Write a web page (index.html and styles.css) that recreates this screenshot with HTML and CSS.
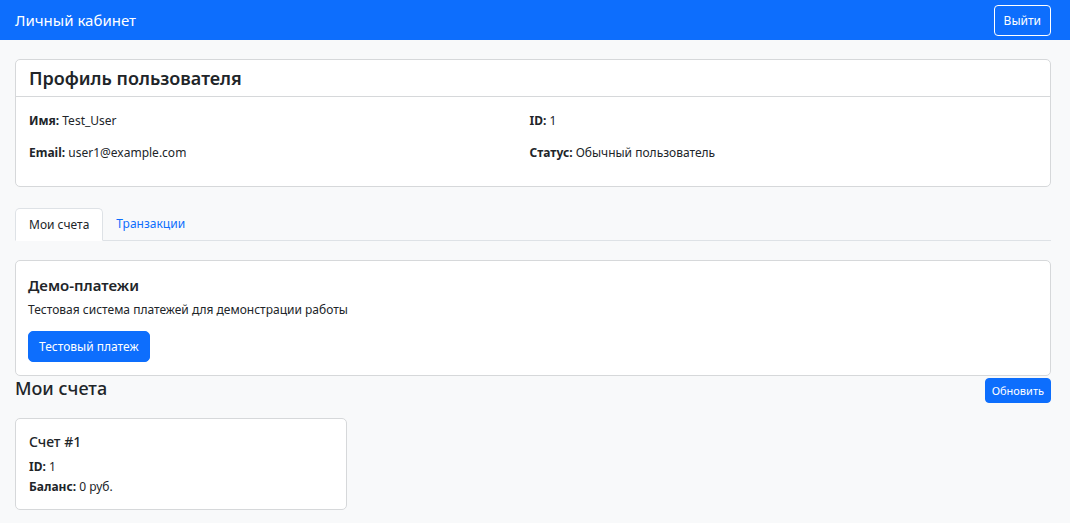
FILE: index.html
```html
<!DOCTYPE html>
<html lang="ru">
<head>
<meta charset="utf-8">
<title>Личный кабинет</title>
<link rel="stylesheet" href="styles.css">
</head>
<body>
<nav class="navbar">
  <span class="brand">Личный кабинет</span>
  <button class="btn-outline">Выйти</button>
</nav>
<main class="container">
  <section class="card profile">
    <div class="card-header"><h2 class="card-title-lg">Профиль пользователя</h2></div>
    <div class="card-body grid2">
      <p><b>Имя:</b> Test_User</p>
      <p><b>ID:</b> 1</p>
      <p><b>Email:</b> user1@example.com</p>
      <p><b>Статус:</b> Обычный пользователь</p>
    </div>
  </section>
  <ul class="tabs">
    <li class="tab active">Мои счета</li>
    <li class="tab link">Транзакции</li>
  </ul>
  <section class="card demo">
    <div class="card-body">
      <h3 class="card-title">Демо-платежи</h3>
      <p class="card-text">Тестовая система платежей для демонстрации работы</p>
      <button class="btn-primary">Тестовый платеж</button>
    </div>
  </section>
  <div class="section-head">
    <h2 class="section-title">Мои счета</h2>
    <button class="btn-primary btn-sm">Обновить</button>
  </div>
  <section class="card account">
    <div class="card-body">
      <h3 class="card-title acc-title">Счет #1</h3>
      <p class="line"><b>ID:</b> 1</p>
      <p class="line"><b>Баланс:</b> 0 руб.</p>
    </div>
  </section>
</main>
</body>
</html>
```
FILE: styles.css
```css
* { box-sizing: border-box; }
html, body { margin: 0; padding: 0; }
body {
  background: #f8f9fa;
  font-family: "Noto Sans", "Open Sans", sans-serif;
  font-size: 12px;
  color: #212529;
  line-height: 1.5;
}
p, h2, h3, ul { margin: 0; padding: 0; }
b { font-weight: 700; }
.navbar {
  background: #0d6efd;
  height: 40px;
  display: flex;
  align-items: center;
  justify-content: space-between;
  padding: 0 19px 0 15px;
}
.brand { color: #fff; font-size: 15px; }
.btn-outline {
  background: transparent;
  color: #fff;
  border: 1px solid #fff;
  border-radius: 4px;
  font-family: inherit;
  font-size: 12px;
  height: 31px;
  padding: 0 9px;
}
.container { padding: 19px 19px 20px 15px; }
.card {
  background: #fff;
  border: 1px solid #d6d8da;
  border-radius: 5px;
}
.card-header {
  border-bottom: 1px solid #d6d8da;
  padding: 6px 13px;
  height: 37px;
}
.card-title-lg { font-size: 18px; font-weight: 600; line-height: 24px; }
.card-body { padding: 13px; }
.profile .card-body { padding: 14px 20px 23px 13px; }
.grid2 {
  display: grid;
  grid-template-columns: 1fr 1fr;
  row-gap: 12px;
}
.grid2 p { line-height: 20px; }
.tabs {
  list-style: none;
  display: flex;
  margin-top: 21px;
  border-bottom: 1px solid #dee2e6;
  height: 33px;
}
.tab {
  padding: 0 13px;
  line-height: 32px;
  height: 33px;
}
.tab.active {
  background: #fff;
  border: 1px solid #dee2e6;
  border-bottom-color: #fff;
  border-radius: 5px 5px 0 0;
}
.tab.link { color: #0d6efd; }
.demo { margin-top: 19px; }
.demo .card-body { padding: 14px 12px 13px; }
.card-title { font-size: 15px; font-weight: 600; line-height: 20px; }
.card-text { margin-top: 6px; line-height: 18px; }
.btn-primary {
  background: #0d6efd;
  color: #fff;
  border: 1px solid #0d6efd;
  border-radius: 5px;
  font-family: inherit;
  font-size: 12px;
  height: 31px;
  padding: 0 10px;
  margin-top: 12px;
}
.section-head {
  display: flex;
  justify-content: space-between;
  align-items: flex-start;
  margin-top: 2px;
}
.section-title { font-size: 18px; font-weight: 500; line-height: 20px; }
.btn-sm {
  font-size: 11px;
  height: 25px;
  padding: 0 6px;
  border-radius: 4px;
  margin-top: 0;
}
.account { width: 332px; margin-top: 15px; }
.account .card-body { padding: 12px 13px 12px; }
.acc-title { font-size: 14px; font-weight: 500; line-height: 22px; }
.line { line-height: 20px; }
.line:first-of-type { margin-top: 4px; }
```
